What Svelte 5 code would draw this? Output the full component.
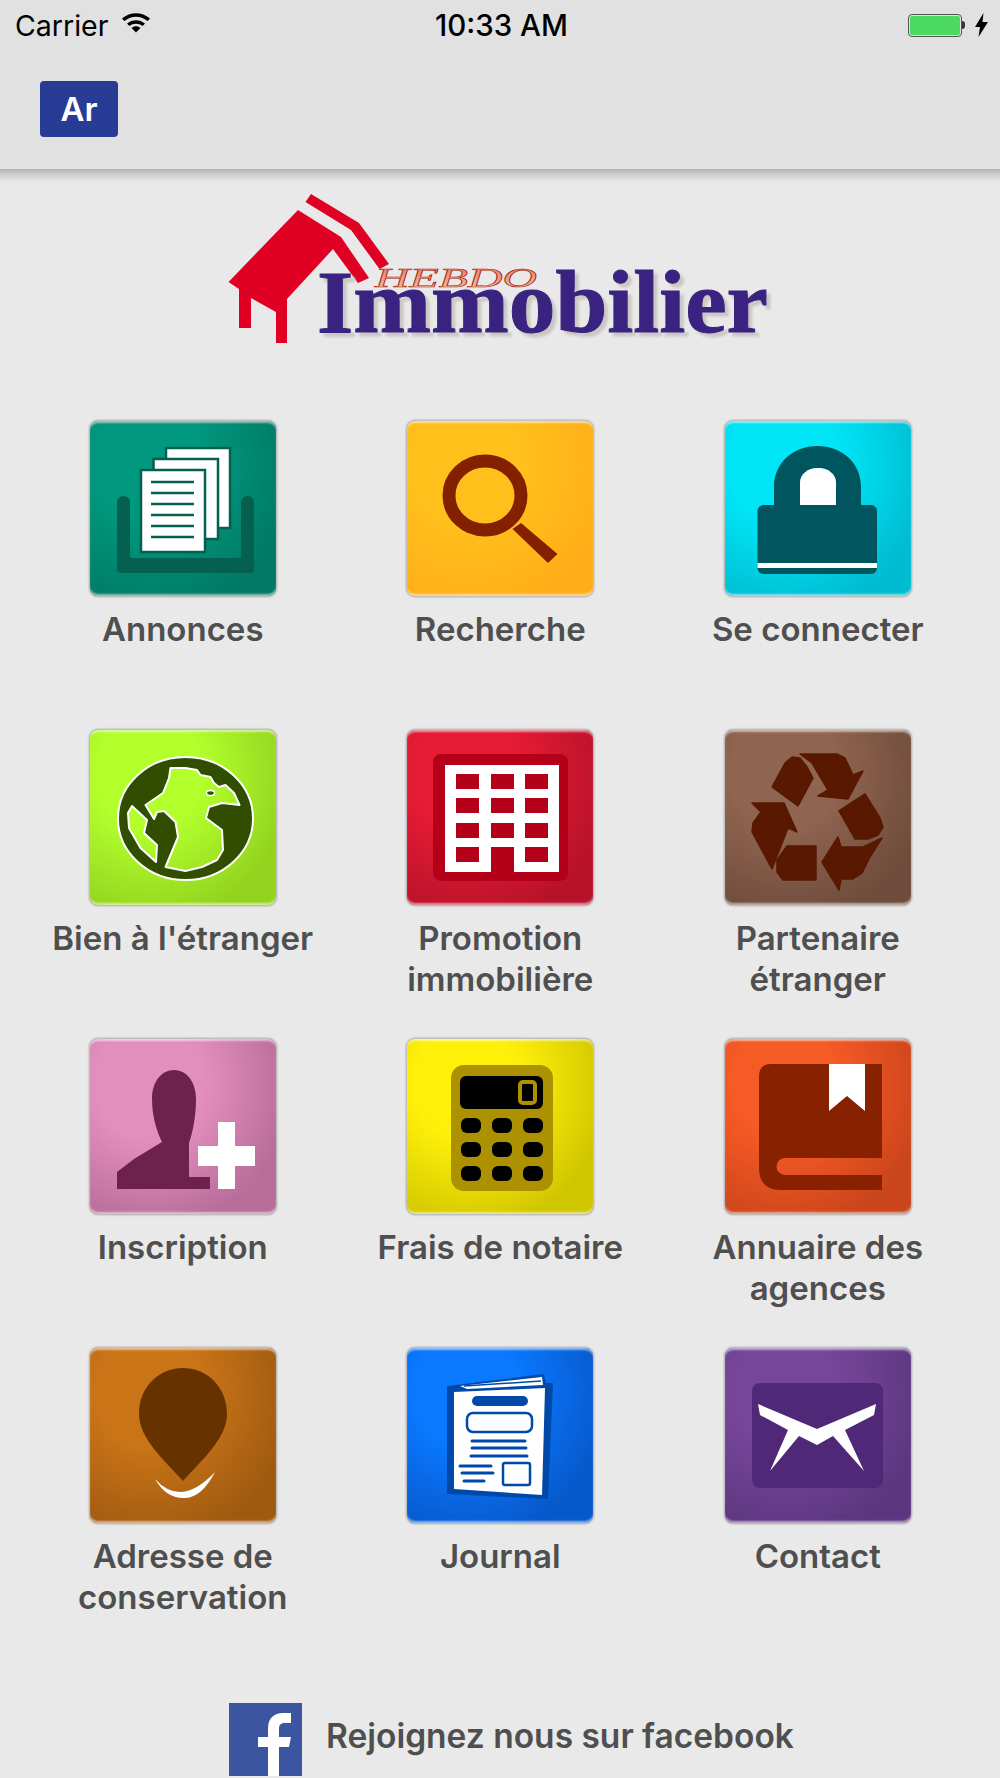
<script lang="ts">
	interface Tile {
		id: string;
		label: string;
		from: string;
		to: string;
	}

	const tiles: Tile[] = [
		{ id: 'annonces', label: 'Annonces', from: '#00987e', to: '#007a66' },
		{ id: 'recherche', label: 'Recherche', from: '#ffc01c', to: '#ffae18' },
		{ id: 'connecter', label: 'Se connecter', from: '#00e6f7', to: '#00bcd2' },
		{ id: 'etranger', label: "Bien à l'étranger", from: '#b2ff2c', to: '#93d31f' },
		{ id: 'promotion', label: 'Promotion immobilière', from: '#e61b35', to: '#b8122a' },
		{ id: 'partenaire', label: 'Partenaire étranger', from: '#8f6450', to: '#6f4c3b' },
		{ id: 'inscription', label: 'Inscription', from: '#e38fbe', to: '#b76c9a' },
		{ id: 'frais', label: 'Frais de notaire', from: '#fff00a', to: '#d0c600' },
		{ id: 'annuaire', label: 'Annuaire des agences', from: '#f65a25', to: '#ca451b' },
		{ id: 'adresse', label: 'Adresse de conservation', from: '#c97417', to: '#a05a10' },
		{ id: 'journal', label: 'Journal', from: '#0a78ff', to: '#0758ca' },
		{ id: 'contact', label: 'Contact', from: '#764699', to: '#5c367f' }
	];
</script>

<div class="page">
	<header class="top">
		<div class="status">
			<div class="status-left">
				<span>Carrier</span>
				<svg class="wifi" width="30" height="22" viewBox="0 0 30 22">
					<path d="M1 7.500C9 .5 21 .5 29 7.500l-2.400 2.600C19.500 4.300 10.500 4.300 3.400 10.100Z" fill="#000" />
					<path d="M6 12.500c5.300-4.500 12.700-4.500 18 0l-2.400 2.600c-3.900-3.100-9.300-3.100-13.200 0Z" fill="#000" />
					<path d="M10.500 17c2.700-2.200 6.300-2.200 9 0L15 21.500Z" fill="#000" />
				</svg>
			</div>
			<span class="clock">10:33 AM</span>
			<div class="status-right">
				<div class="battery"><div class="charge"></div></div>
				<div class="nub"></div>
				<svg width="13" height="24" viewBox="0 0 13 24">
					<path d="M8.500 0 0 14h5L3.500 24 13 9H7.500Z" fill="#000" />
				</svg>
			</div>
		</div>
		<div class="nav">
			<button class="lang">Ar</button>
		</div>
	</header>

	<div class="logo">
		<svg width="580" height="170" viewBox="0 0 580 170">
			<defs>
				<linearGradient id="hebdo" x1="0" y1="0" x2="0" y2="1">
					<stop offset="0" stop-color="#e8735a" />
					<stop offset="1" stop-color="#f3c9a8" />
				</linearGradient>
			</defs>
			<polygon fill="#df0024" points="88,25 131,52 159,93 148,98 123,64 77,114 77,158 66,158 66,127 41,113 41,143 29,143 29,104 18.500,97" />
			<polygon fill="#df0024" points="101,9 149,38 179,79 169.500,84 141,45 95.500,17" />
			<text class="logo-word" x="107" y="147" textLength="451" lengthAdjust="spacingAndGlyphs">Immobilier</text>
			<text class="logo-hebdo" x="165" y="102" textLength="162" lengthAdjust="spacingAndGlyphs" fill="url(#hebdo)">HEBDO</text>
		</svg>
	</div>

	<div class="grid">
		{#each tiles as tile}
			<a class="cell" href="#{tile.id}">
				<div class="tile" style="--from: {tile.from}; --to: {tile.to}">
					<svg width="186" height="176" viewBox="0 0 186 176">
						{#if tile.id === 'annonces'}
							<path fill="#05604f" d="M27 81a6.500 6 0 0 1 13 0v56h111V81a6.500 6 0 0 1 13 0v67q0 4-4 4H31q-4 0-4-4Z" />
							<g fill="#fff" stroke="#05604f" stroke-width="2.500">
								<rect x="76" y="27" width="64" height="80" />
								<rect x="63.500" y="38" width="64.500" height="80" />
								<rect x="51" y="49" width="64" height="82" />
							</g>
							<path stroke="#05604f" stroke-width="2.500" d="M61 61h43M61 72h43M61 83h43M61 94h43M61 105h43M61 116h43" />
						{:else if tile.id === 'recherche'}
							<ellipse cx="78" cy="74.500" rx="36" ry="34.500" fill="none" stroke="#832000" stroke-width="13" />
							<polygon fill="#832000" points="114,102 150.500,133 141,142 105.500,108" />
						{:else if tile.id === 'connecter'}
							<path fill="#00555f" d="M49 90V66c0-24 19-41 43.500-41S136 42 136 66v24H111V62c0-9-8-15-18-15s-18 6-18 15v28Z" />
							<path fill="#fff" d="M75 84V62c0-9 8-15 18-15s18 6 18 15v22Z" />
							<rect x="32.500" y="84" width="119.500" height="69" rx="6" fill="#00555f" />
							<rect x="32.500" y="142" width="119.500" height="5" fill="#fff" />
						{:else if tile.id === 'etranger'}
							<path
								fill="#304d00"
								fill-rule="evenodd"
								stroke="#fff"
								stroke-width="2"
								stroke-linejoin="round"
								d="M28 88.500a67.500 61.500 0 1 0 135 0a67.500 61.500 0 1 0-135 0ZM80.500 38 95.500 38 107 40 110.500 45 120.500 47 124 53 129 57 135.500 55 144 63 149.500 75 132 73 119 77 116 88 132 100 133 120 127 130 112 137 95.500 141 75.500 137 88 107 85.500 92 74 81 67 82 64 89 55.500 75 73 63 79 48ZM42 76 57 90 54 103 67 115 66 132 50.500 118 39 98 38 83Z"
							/>
							<ellipse cx="120.500" cy="63" rx="4" ry="2.500" fill="#304d00" stroke="#fff" stroke-width="1.500" />
						{:else if tile.id === 'promotion'}
							<rect x="26" y="24" width="135" height="127" rx="8" fill="#b5001a" />
							<rect x="38" y="35" width="114" height="107" fill="#fff" />
							<g fill="#b5001a">
								{#each [44, 68, 93, 117] as y}
									{#each [49, 84, 118] as x}
										<rect {x} {y} width="23" height="15" />
									{/each}
								{/each}
								<rect x="84" y="117" width="23" height="25" />
							</g>
						{:else if tile.id === 'partenaire'}
							<g fill="#581900" stroke="#581900" stroke-width="1.500" stroke-linejoin="round">
								<polygon points="47,57 60,33 67,27 75,28 82,37 88,48 73,76" />
								<polygon points="75,24 112,24 120,28 128,45 138,41 123,69 93,66 103,60 87,33" />
								<polygon points="140,64 155,88 158,97 153,105 143,109 130,109 114,81" />
								<polygon points="157,108 145,127 137,143 128,149 116,149 114,160 97,132 113,107 116,117 138,117" />
								<polygon points="62,116 91,116 91,150 58,150 52,142 52,130" />
								<polygon points="27,73 59,73 72,102 63,98 47,139 27,102 28,93 36,82" />
							</g>
						{:else if tile.id === 'inscription'}
							<path fill="#6d214e" d="M84 31C72 31 62 42 62 60c0 20 6 35 10 43L44 120 27 133v17h93v-12H99V104c3-9 7-24 7-44 0-18-10-29-22-29Z" />
							<path fill="#fff" d="M128 83h17v24h20v20h-20v23h-17v-23h-20v-20h20Z" />
						{:else if tile.id === 'frais'}
							<rect x="44" y="26" width="102" height="126" rx="13" fill="#ac9200" />
							<rect x="53" y="37" width="83" height="33" rx="6" fill="#000" />
							<rect x="113" y="43" width="15" height="21" rx="3" fill="#000" stroke="#ac9200" stroke-width="4" />
							<g fill="#000">
								{#each [79, 103, 127] as y}
									{#each [54, 85, 116] as x}
										<rect {x} {y} width="20" height="15" rx="6" />
									{/each}
								{/each}
							</g>
						{:else if tile.id === 'annuaire'}
							<path fill="#882100" d="M46 25h111v94H60a8.500 8.500 0 0 0 0 17h97v15H56q-22 0-22-22V37q0-12 12-12Z" />
							<polygon fill="#fff" points="104,25 140,25 140,72 122,57 104,72" />
						{:else if tile.id === 'adresse'}
							<path fill="#663300" d="M93 20C118 20 137 40 137 66 137 90 112 112 93 133 74 112 49 90 49 66 49 40 68 20 93 20Z" />
							<path fill="#fff" d="M65 131Q91 160 125 124 111 151 93 150 76 150 65 131Z" />
						{:else if tile.id === 'journal'}
							<path fill="#0049a8" stroke="#0049a8" stroke-width="2" stroke-linejoin="round" d="M41 39 136 27l2 9h7l-5 114-99-5Z" />
							<path fill="#fff" d="M53 38 135 29l1 8-76 4Z" />
							<path fill="none" stroke="#0049a8" stroke-width="1.500" d="M57 38 134 33" />
							<path fill="#fff" d="M47 44 138 40l-3 107-88-6Z" />
							<rect x="65" y="48" width="56" height="10" rx="5" fill="#0049a8" />
							<rect x="60" y="65" width="65" height="19" rx="6" fill="#fff" stroke="#0049a8" stroke-width="2.500" />
							<path stroke="#0049a8" stroke-width="3" stroke-linecap="round" d="M65 93h53M65 100h54M64 108h56M53 118h31M55 125h31M57 133h20" />
							<rect x="96" y="115" width="27" height="22" rx="2" fill="#fff" stroke="#0049a8" stroke-width="2.500" />
						{:else if tile.id === 'contact'}
							<rect x="27" y="35" width="131" height="105" rx="8" fill="#502878" />
							<path fill="#fff" d="M33 56 92 81 151 56 149 67 120 82 139 123 108 88 92 97 74 88 45 123 63 82 35 67Z" />
						{/if}
					</svg>
				</div>
				<span class="label">{tile.label}</span>
			</a>
		{/each}
	</div>

	<a class="facebook" href="#facebook">
		<svg width="73" height="73" viewBox="0 0 73 73">
			<rect width="73" height="73" fill="#3b55a0" />
			<path fill="#fff" d="M39 73V44H29V34h10v-8c0-11 6-16 15-16h8v10h-6c-5 0-6 2-6 7v7h12l-2 10H50v29Z" />
		</svg>
		<span>Rejoignez nous sur facebook</span>
	</a>
</div>

<style>
	:global(body) {
		margin: 0;
		background: #e9e9e9;
	}

	.page {
		height: 1778px;
		overflow: hidden;
		font-family: Inter, 'Liberation Sans', sans-serif;
		color: #4f4f4f;
		background: #e9e9e9;
	}

	.top {
		height: 169px;
		background: #e1e1e1;
		position: relative;
	}

	.top::after {
		content: '';
		position: absolute;
		left: 0;
		right: 0;
		top: 100%;
		height: 13px;
		background: linear-gradient(#b3b3b3, #cfcfcf 45%, #e9e9e9);
	}

	.status {
		height: 50px;
		display: grid;
		grid-template-columns: 1fr auto 1fr;
		align-items: center;
		padding: 0 12px 0 15px;
		font-size: 28.500px;
		color: #000;
	}

	.status-left {
		display: flex;
		align-items: center;
		gap: 13px;
	}

	.wifi {
		margin-top: -6px;
	}

	.clock {
		font-size: 29.500px;
		font-weight: 500;
	}

	.status-right {
		display: flex;
		align-items: center;
		justify-content: flex-end;
	}

	.battery {
		box-sizing: border-box;
		width: 54px;
		height: 23px;
		border: 1px solid #555;
		border-radius: 4px;
		padding: 1px;
	}

	.charge {
		height: 100%;
		background: #4cd964;
		border-radius: 2px;
	}

	.nub {
		width: 3px;
		height: 8px;
		background: #333;
		border-radius: 0 3px 3px 0;
		margin-right: 10px;
	}

	.nav {
		padding: 31px 0 0 40px;
	}

	.lang {
		width: 78px;
		height: 56px;
		padding: 0;
		border: 0;
		border-radius: 4px;
		background: #283c96;
		color: #fff;
		font: 600 33px Inter, 'Liberation Sans', sans-serif;
	}

	.logo {
		padding: 16px 0 65px 210px;
		line-height: 0;
	}

	.logo-word {
		font: bold 88px 'Liberation Serif', serif;
		fill: #3a2380;
		stroke: #3a2380;
		stroke-width: 1;
		filter: drop-shadow(4px 4px 1px #cbc8c4);
	}

	.logo-hebdo {
		font: italic 27px 'Liberation Serif', serif;
		stroke: #a81c10;
		stroke-width: 0.6;
	}

	.grid {
		display: grid;
		grid-template-columns: repeat(3, 317.5px);
		grid-auto-rows: 309px;
		padding-left: 24px;
	}

	.cell {
		display: flex;
		flex-direction: column;
		align-items: center;
		text-decoration: none;
		color: inherit;
	}

	.tile {
		box-sizing: border-box;
		width: 188px;
		height: 177px;
		border: 1px solid #bdbdbd;
		border-radius: 9px;
		overflow: hidden;
		line-height: 0;
		background: radial-gradient(ellipse at 32% 25%, var(--from) 30%, var(--to) 80%);
		box-shadow: inset 0 3px 2px -1px rgba(255, 255, 255, 0.55), inset 0 -3px 2px -1px rgba(255, 255, 255, 0.55), 0 0 2px #9a9a9a;
	}

	.label {
		margin-top: 12px;
		max-width: 285px;
		font-size: 33px;
		font-weight: 600;
		line-height: 41px;
		text-align: center;
	}

	.facebook {
		display: flex;
		align-items: center;
		gap: 24px;
		margin: 47px 0 0 229px;
		font-size: 33.500px;
		font-weight: 600;
		text-decoration: none;
		color: inherit;
	}

	.facebook span {
		margin-bottom: 8px;
	}
</style>
